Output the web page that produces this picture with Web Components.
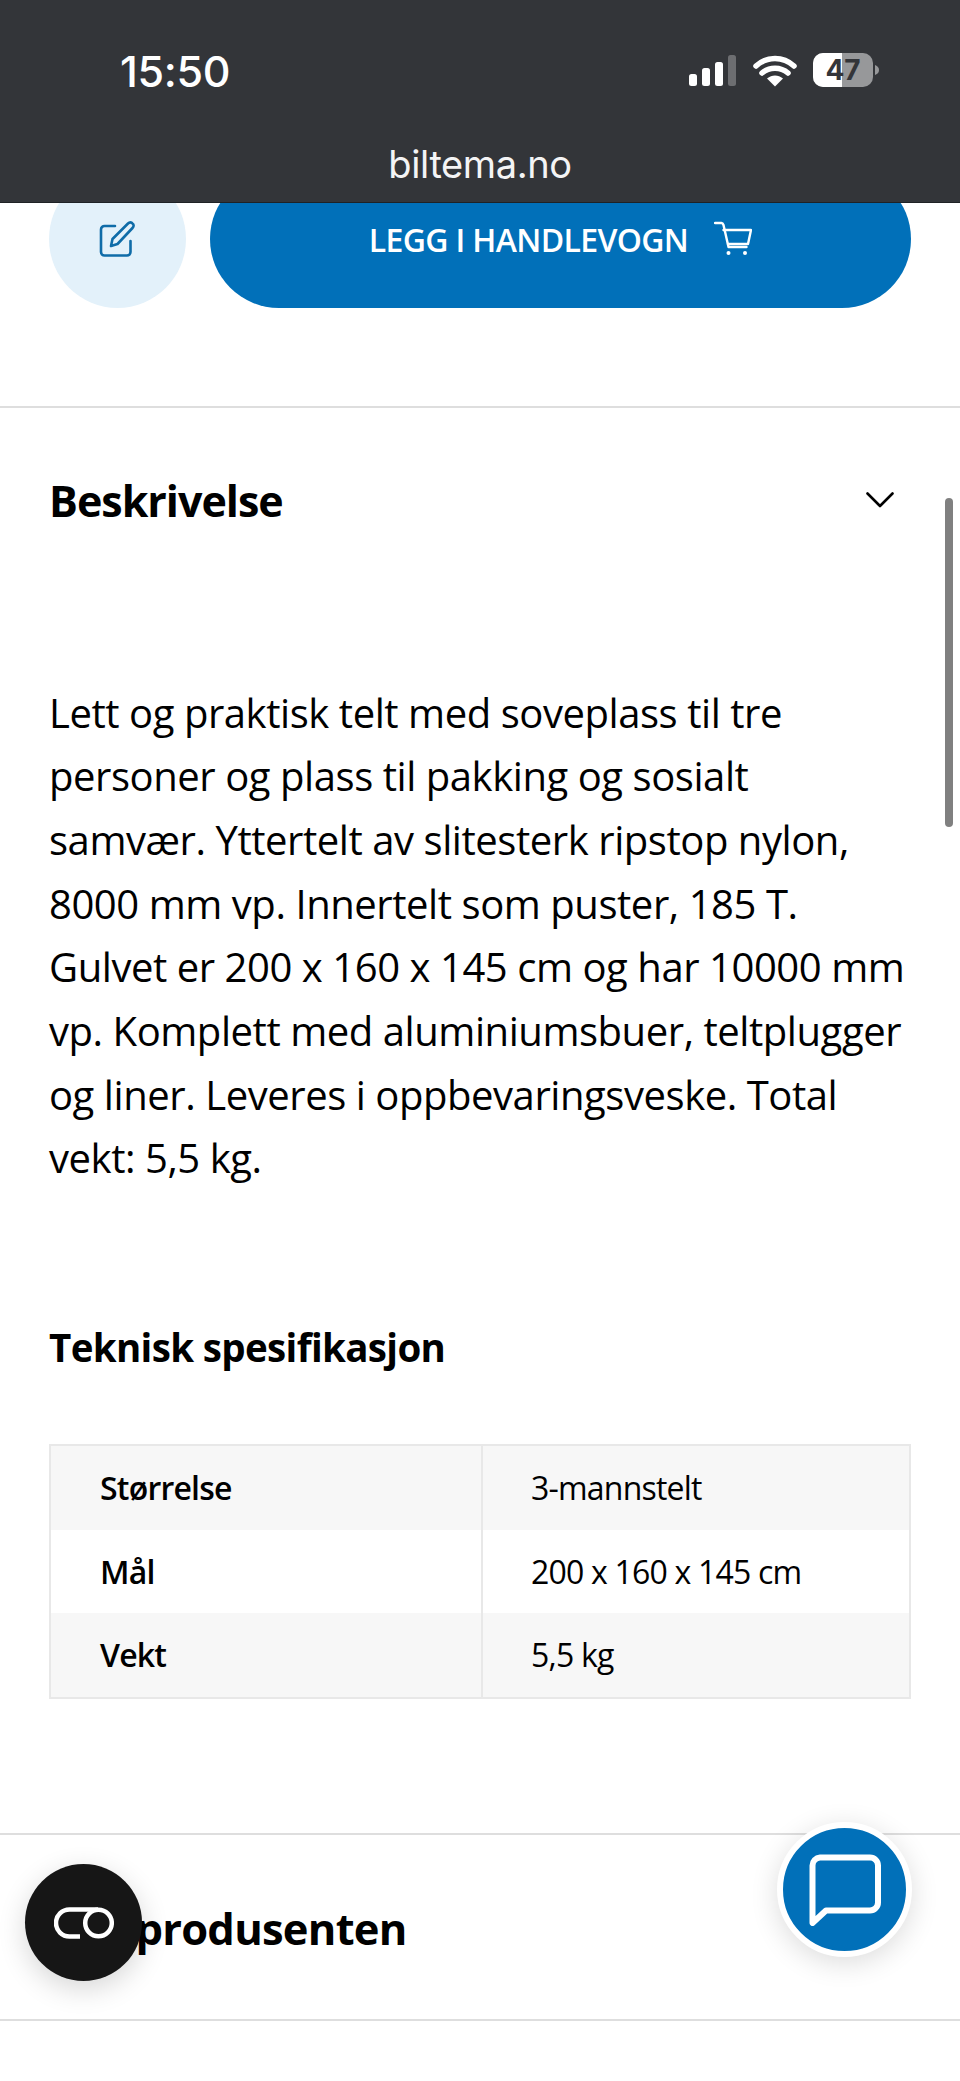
<!DOCTYPE html>
<html lang="no">
<head>
<meta charset="utf-8">
<title>Biltema</title>
<style>
  html, body { margin: 0; padding: 0; background: #fff; }
  body { width: 960px; height: 2081px; overflow: hidden; position: relative; font-family: "Open Sans", "Noto Sans", sans-serif; color: #000; }
</style>
</head>
<body>
<phone-status time="15:50" host="biltema.no"></phone-status>
<buy-row label="LEGG I HANDLEVOGN"></buy-row>
<fold-section title="Beskrivelse" open>
  <prod-text>Lett og praktisk telt med soveplass til tre personer og plass til pakking og sosialt samvær. Yttertelt av slitesterk ripstop nylon, 8000 mm vp. Innertelt som puster, 185 T. Gulvet er 200 x 160 x 145 cm og har 10000 mm vp. Komplett med aluminiumsbuer, teltplugger og liner. Leveres i oppbevaringsveske. Total vekt: 5,5 kg.</prod-text>
  <spec-table heading="Teknisk spesifikasjon">
    <spec-row name="Størrelse" value="3-mannstelt"></spec-row>
    <spec-row name="Mål" value="200 x 160 x 145 cm"></spec-row>
    <spec-row name="Vekt" value="5,5 kg"></spec-row>
  </spec-table>
</fold-section>
<fold-section title="Om produsenten" compact></fold-section>
<scroll-thumb></scroll-thumb>
<float-buttons></float-buttons>

<script>
  const shadow = (el, html) => { el.attachShadow({ mode: 'open' }).innerHTML = html; };

  // Dark browser chrome: clock, signal icons and the site's address.
  customElements.define('phone-status', class extends HTMLElement {
    connectedCallback() {
      shadow(this, `<style>
        :host { display: block; position: relative; z-index: 5; height: 202px; background: #333539; border-bottom: 1px solid #1f2226; color: #fff; font-family: "Inter", "Liberation Sans", sans-serif; }
        .top { display: flex; justify-content: space-between; align-items: center; height: 56px; padding: 43px 80px 0 120px; }
        .time { font-size: 43px; font-weight: 500; letter-spacing: -.3px; line-height: 56px; }
        svg { display: block; }
        .host { margin-top: 41px; text-align: center; font-size: 38px; line-height: 48px; font-weight: 400; font-family: "Inter", sans-serif; letter-spacing: -.4px; color: #f4f4f5; }
      </style>
      <div class="top">
        <span class="time">${this.getAttribute('time')}</span>
        <svg width="192" height="36" viewBox="0 0 192 36">
          <rect x="1" y="21" width="8" height="12" rx="2.5" fill="#fff"/>
          <rect x="14" y="15" width="8" height="18" rx="2.5" fill="#fff"/>
          <rect x="27" y="9" width="8" height="24" rx="2.5" fill="#fff"/>
          <rect x="40" y="2" width="8" height="31" rx="2.5" fill="#6d6e71"/>
          <path d="M68 13c11-10 27-10 38 0M74 20c7.500-6.500 18.500-6.500 26 0" fill="none" stroke="#fff" stroke-width="5.500" stroke-linecap="round"/>
          <path d="M79 25.500c5-4 11-4 16 0L87 33.500z" fill="#fff"/>
          <defs><clipPath id="lit"><rect x="125" y="0" width="29" height="36"/></clipPath></defs>
          <rect x="125" y="0" width="60" height="34" rx="10" fill="#97989a"/>
          <rect x="125" y="0" width="60" height="34" rx="10" fill="#fff" clip-path="url(#lit)"/>
          <path d="M187 12c3 1 4 3 4 5s-1 4-4 5z" fill="#97989a"/>
          <text x="155" y="27" text-anchor="middle" font-family="Inter, sans-serif" font-size="28" font-weight="700" fill="#333539">47</text>
        </svg>
      </div>
      <div class="host">${this.getAttribute('host')}</div>`);
    }
  });

  // Edit button and the pill-shaped add-to-cart button; the chrome overlaps their top edge.
  customElements.define('buy-row', class extends HTMLElement {
    connectedCallback() {
      shadow(this, `<style>
        :host { display: flex; gap: 24px; margin: -33px 49px 0; height: 138px; }
        .edit { flex: 0 0 137px; border-radius: 50%; background: #e3f1fa; display: flex; align-items: center; justify-content: center; }
        .add { flex: 1; border-radius: 69px; background: #0170b9; color: #fff; display: flex; align-items: center; justify-content: center; gap: 26px; font-size: 32px; font-weight: 600; letter-spacing: -.65px; }
        svg { display: block; }
        .edit svg { margin-right: 1px; }
      </style>
      <div class="edit">
        <svg width="36" height="36" viewBox="0 0 36 36" fill="none" stroke="#0f6ca8" stroke-width="2.600" stroke-linecap="round" stroke-linejoin="round">
          <path d="M16 5H5.500A3.500 3.500 0 0 0 2 8.500v22.500A3.500 3.500 0 0 0 5.500 34.500H28a3.500 3.500 0 0 0 3.500-3.500V20"/>
          <path d="M12 25l1.500-7L29 2.500c1.500-1.500 3.500-1.500 4.500 0 1.500 1 1.500 3 0 4.500L18.500 23z"/>
        </svg>
      </div>
      <div class="add"><span>${this.getAttribute('label')}</span>
        <svg width="38" height="36" viewBox="0 0 38 36" fill="none" stroke="#fff" stroke-width="2.400" stroke-linecap="round" stroke-linejoin="round">
          <path d="M1 2h6.500c1 0 1.500.5 2 2l5 22h18"/>
          <path d="M9.500 9H37l-3 14H14"/>
          <circle cx="14.500" cy="32" r="2" fill="#fff" stroke="none"/><circle cx="31" cy="32" r="2" fill="#fff" stroke="none"/>
        </svg>
      </div>`);
    }
  });

  // Accordion section, with a top rule, a title and an optional chevron.
  customElements.define('fold-section', class extends HTMLElement {
    connectedCallback() {
      const open = this.hasAttribute('open');
      shadow(this, `<style>
        :host { display: block; border-top: 2px solid #dedede; font-family: "Open Sans", sans-serif; }
        :host([open]) { margin-top: 98px; }
        :host([compact]) { border-bottom: 2px solid #dedede; height: 184px; }
        .head { display: flex; justify-content: space-between; align-items: flex-start; padding: 0 49px; }
        h2 { margin: 0; font-size: ${open ? 43 : 43.5}px; line-height: 56px; font-weight: 700; letter-spacing: ${open ? -1 : -.75}px; padding-top: ${open ? 65 : 66}px; }
        svg { display: block; margin: 84px 17px 0 0; }
        .body { padding: 0 49px; }
      </style>
      <div class="head"><h2>${this.getAttribute('title')}</h2>
      ${open ? `<svg width="28" height="16" viewBox="0 0 28 16" fill="none" stroke="#000" stroke-width="2.600" stroke-linecap="round" stroke-linejoin="round"><path d="M1.500 1.500L14 14 26.500 1.500"/></svg>` : ''}</div>
      <div class="body"><slot></slot></div>`);
    }
  });

  // Product description paragraph.
  customElements.define('prod-text', class extends HTMLElement {
    connectedCallback() {
      shadow(this, `<style>
        :host { display: block; margin-top: 151.500px; font-size: 40px; line-height: 63.700px; letter-spacing: -.44px; color: #000; }
      </style><slot></slot>`);
    }
  });

  // Specification heading plus a bordered, zebra-striped table.
  customElements.define('spec-table', class extends HTMLElement {
    connectedCallback() {
      shadow(this, `<style>
        :host { display: block; margin-top: 133px; padding-bottom: 134px; }
        h3 { margin: 0 0 73px; font-size: 38.500px; line-height: 48px; font-weight: 700; letter-spacing: -.65px; }
        .grid { border: 2px solid #e8e8e8; }
      </style><h3>${this.getAttribute('heading')}</h3><div class="grid"><slot></slot></div>`);
    }
  });

  customElements.define('spec-row', class extends HTMLElement {
    connectedCallback() {
      shadow(this, `<style>
        :host { display: grid; grid-template-columns: 432px 1fr; height: 83.500px; font-size: 32px; letter-spacing: -.8px; align-items: stretch; background: #fff; }
        :host(:nth-child(odd)) { background: #f7f7f7; }
        div { display: flex; align-items: center; }
        .k { padding-left: 49px; font-weight: 600; border-right: 2px solid #e8e8e8; }
        .v { padding-left: 48px; }
      </style><div class="k">${this.getAttribute('name')}</div><div class="v">${this.getAttribute('value')}</div>`);
    }
  });

  // Overlay scrollbar thumb.
  customElements.define('scroll-thumb', class extends HTMLElement {
    connectedCallback() {
      shadow(this, `<style>
        :host { position: absolute; left: 945px; top: 498px; width: 8px; height: 329px; border-radius: 4px; background: #808080; }
      </style>`);
    }
  });

  // Floating round buttons anchored over the page's lower corners.
  customElements.define('float-buttons', class extends HTMLElement {
    connectedCallback() {
      shadow(this, `<style>
        :host { display: block; }
        .b { position: absolute; border-radius: 50%; display: flex; align-items: center; justify-content: center; }
        .co { left: 25px; top: 1864px; width: 117px; height: 117px; background: #161616; box-shadow: 0 8px 28px rgba(0,0,0,.16); }
        .chat { left: 777px; top: 1822px; width: 123px; height: 123px; border: 6px solid #fff; background: #0170b9; box-shadow: 0 6px 28px rgba(0,0,0,.14); }
        svg { display: block; }
      </style>
      <div class="b co">
        <svg width="60" height="32" viewBox="0 0 60 32" fill="none" stroke="#fff" stroke-width="4.500">
          <path d="M44 2.500H15.500a13.500 13.500 0 0 0 0 27H26"/>
          <circle cx="44.500" cy="16" r="13.300"/>
        </svg>
      </div>
      <div class="b chat">
        <svg width="72" height="72" viewBox="0 0 72 72" fill="none" stroke="#fff" stroke-width="6" stroke-linejoin="round">
          <path d="M11 3.500h50a8 8 0 0 1 8 8v37a8 8 0 0 1-8 8H17L3.500 69V11.500a8 8 0 0 1 7.500-8z"/>
        </svg>
      </div>`);
    }
  });
</script>
</body>
</html>
